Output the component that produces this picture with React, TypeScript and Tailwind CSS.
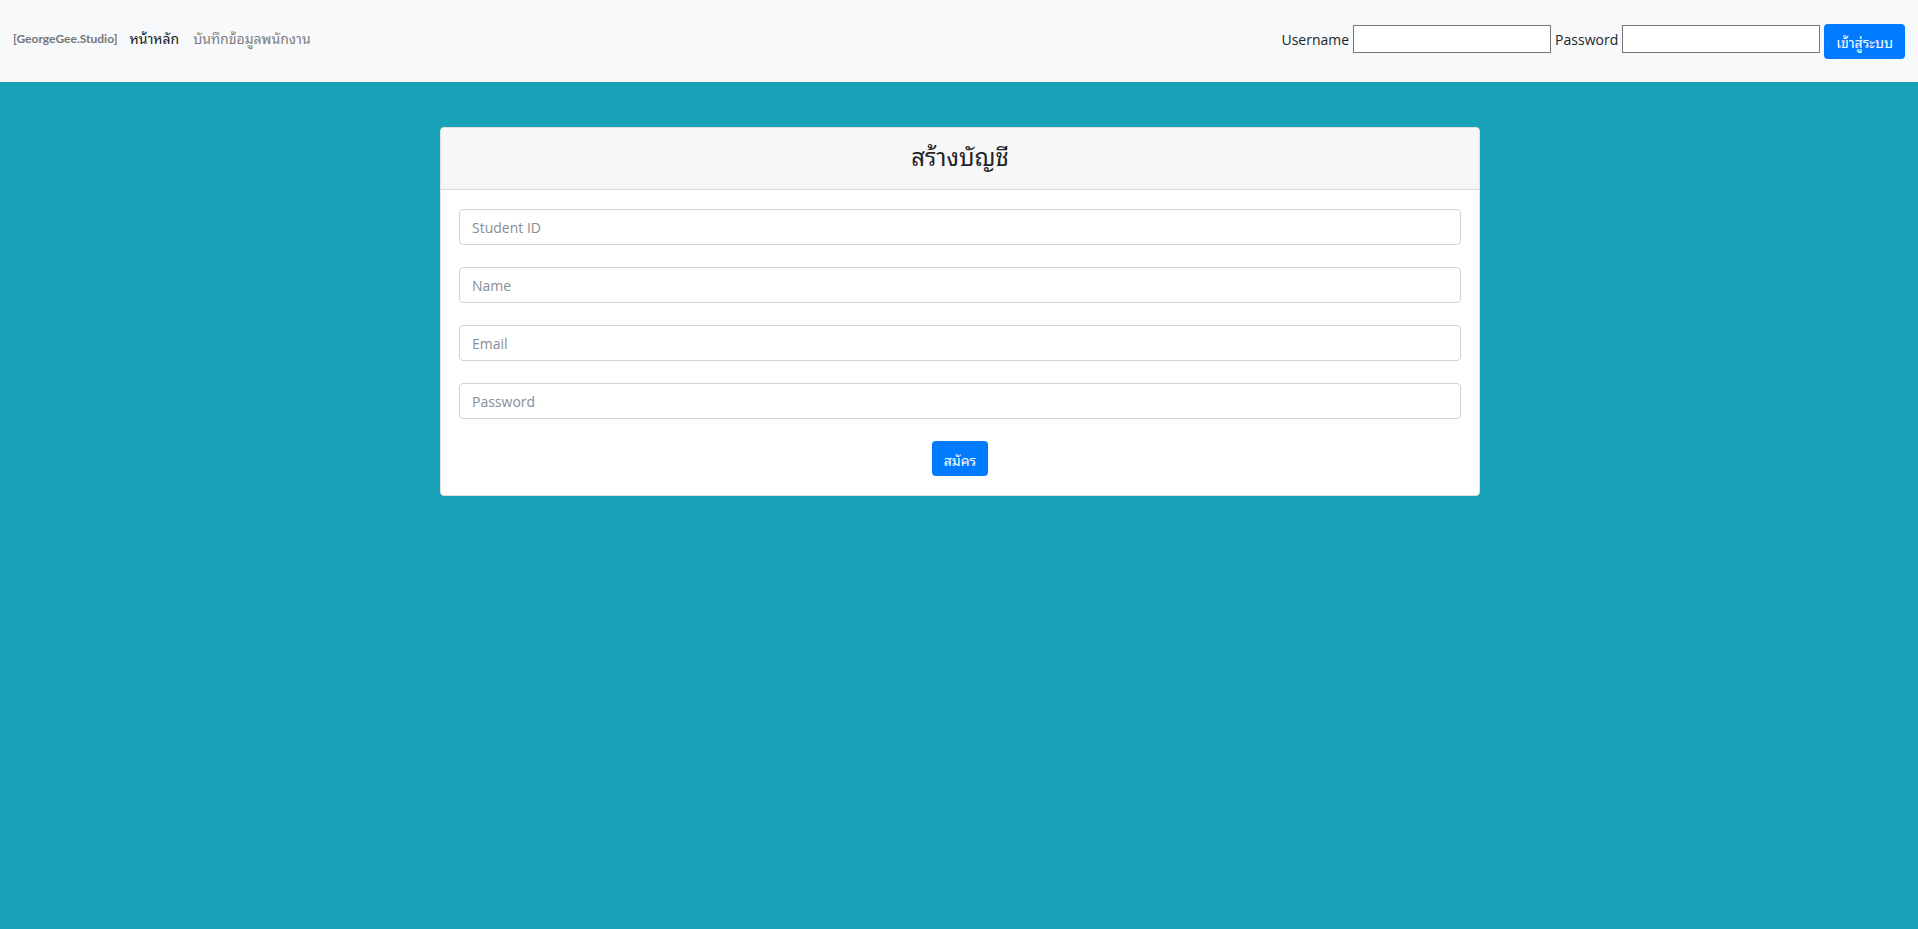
const fields = [
  { id: "student-id", label: "Student ID", type: "text" },
  { id: "name", label: "Name", type: "text" },
  { id: "email", label: "Email", type: "email" },
  { id: "new-password", label: "Password", type: "password" },
];

const buttonClass =
  "h-[35px] rounded-[4px] bg-[#007bff] px-3 pt-1 text-sm leading-5 text-white hover:bg-[#0069d9]";

const navInputClass = "h-7 w-[198px] border border-[#767676] bg-white px-1";

function Navbar() {
  return (
    <nav className="flex h-[82px] items-center justify-between bg-[#f8f9fa] px-[13px] pb-1">
      <div className="flex items-center">
        <a href="#" className="mr-3 font-['Lato',sans-serif] text-xs leading-5 font-bold text-[#747679]">
          [GeorgeGee.Studio]
        </a>
        <a href="#" className="mr-3.5 text-sm leading-5 text-[#191a1a]">
          หน้าหลัก
        </a>
        <a href="#" className="text-sm leading-5 text-[#7c7d7d]">
          บันทึกข้อมูลพนักงาน
        </a>
      </div>
      <form className="flex items-center gap-1 text-sm leading-6">
        <label htmlFor="username" className="pt-0.5">Username</label>
        <input id="username" type="text" className={navInputClass} />
        <label htmlFor="password" className="pt-0.5">Password</label>
        <input id="password" type="password" className={navInputClass} />
        <div className="pt-1">
          <button type="button" className={buttonClass}>
            เข้าสู่ระบบ
          </button>
        </div>
      </form>
    </nav>
  );
}

export default function App() {
  return (
    <div className="min-h-screen bg-[#17a2b8] font-['Open_Sans','Leelawadee_UI','Noto_Sans_Thai_Looped','Noto_Looped_Thai','Loma','Garuda','Umpush','Waree','Sarabun',sans-serif] text-[#212529]">
      <Navbar />
      <main className="pt-[45px] pr-4 pl-[18px]">
        <section className="mx-auto max-w-[1040px] overflow-hidden rounded-[4px] border border-[#dfdfdf] bg-white">
          <header className="flex h-[62px] items-center justify-center border-b border-[#d9d9d9] bg-[#f7f7f7]">
            <h1 className="pb-1 text-2xl leading-7">สร้างบัญชี</h1>
          </header>
          <form className="flex flex-col gap-[22px] px-[18px] pt-[19px] pb-[19px]">
            {fields.map((field) => (
              <input
                key={field.id}
                id={field.id}
                type={field.type}
                aria-label={field.label}
                placeholder={field.label}
                className="h-9 w-full rounded-[4px] border border-[#ced4da] bg-white px-3 text-sm leading-6 placeholder:text-[#868e96]"
              />
            ))}
            <div className="flex justify-center">
              <button type="button" className={buttonClass}>
                สมัคร
              </button>
            </div>
          </form>
        </section>
      </main>
    </div>
  );
}
